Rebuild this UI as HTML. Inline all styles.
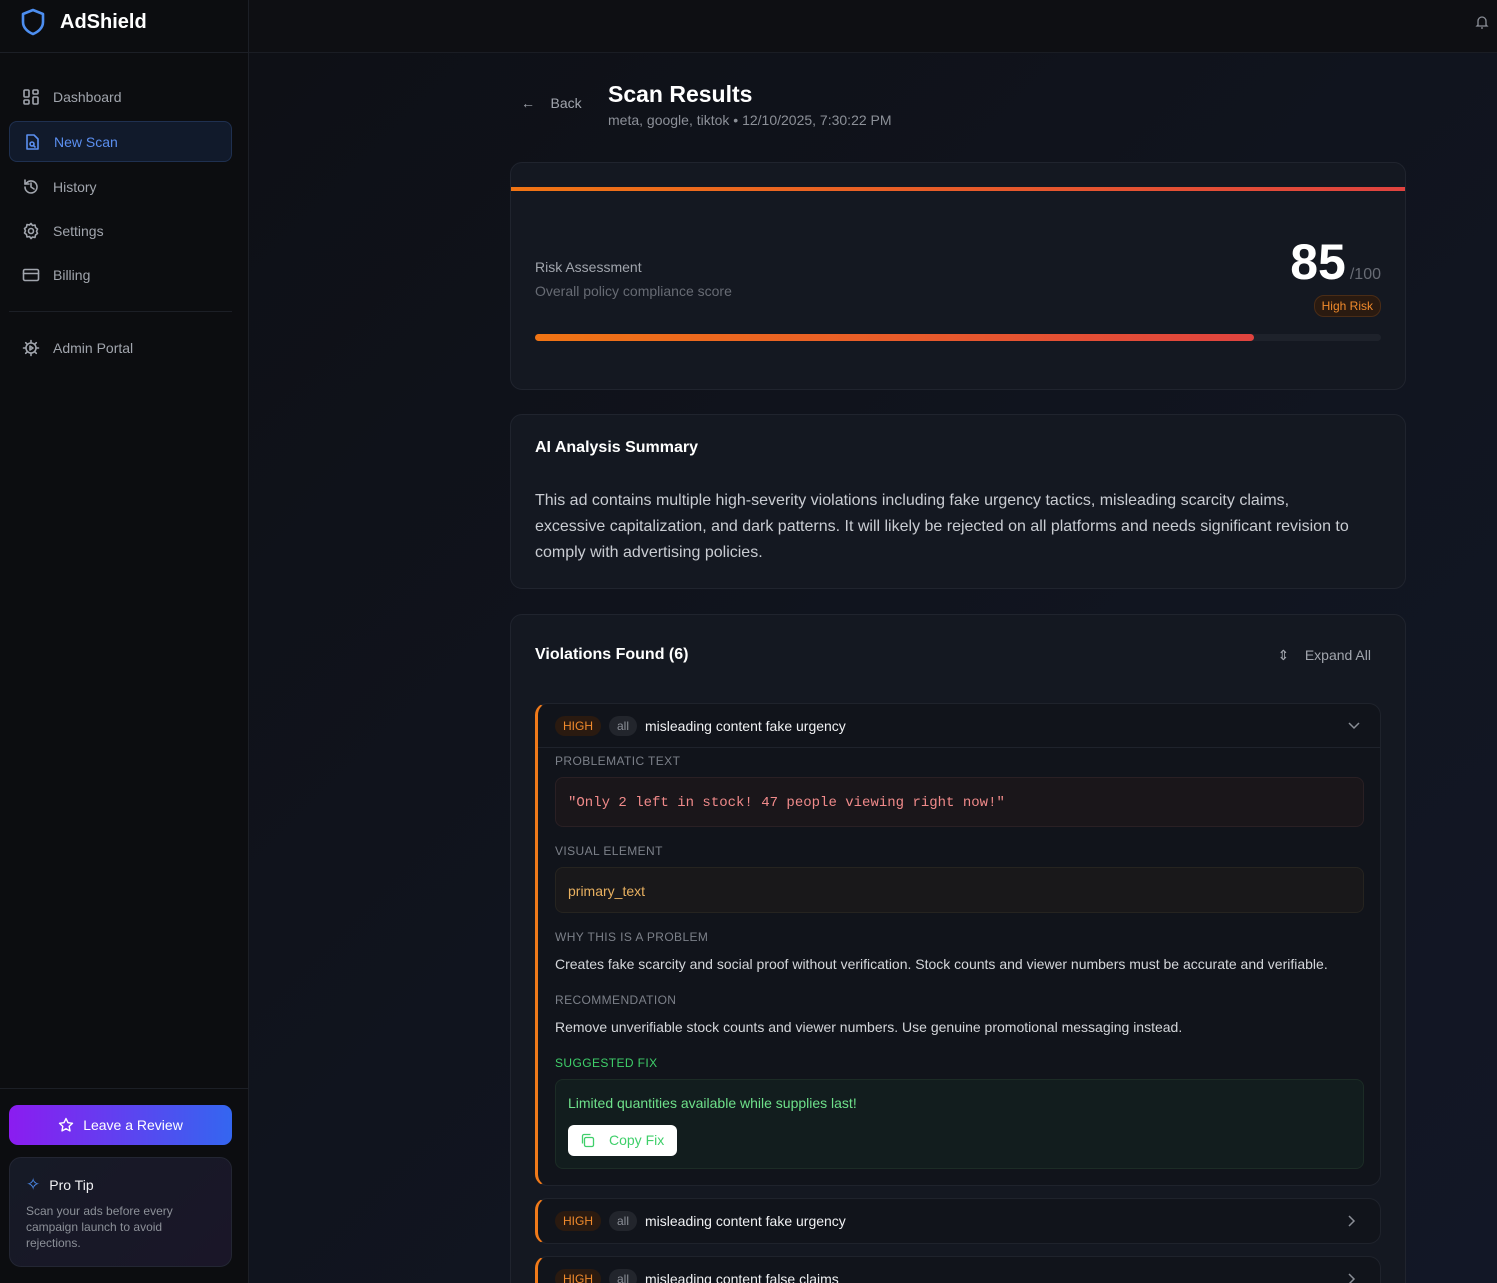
<!DOCTYPE html>
<html><head><meta charset="utf-8"><style>
*{box-sizing:border-box;margin:0;padding:0}
html,body{width:1497px;height:1283px;overflow:hidden}
body{font-family:"Liberation Sans",sans-serif;background:#0f1219;color:#e5e7eb}
#w{position:relative;width:1497px;height:1283px;overflow:hidden}
.sb{position:absolute;left:0;top:0;width:249px;height:1283px;background:#0c0d10;border-right:1px solid #1c1f26}
.top{position:absolute;left:249px;top:0;right:0;height:53px;background:#0e0f13;border-bottom:1px solid #1a1d24}
.main{position:absolute;left:249px;top:53px;right:0;bottom:0;background:linear-gradient(135deg,#0e1016 0%,#111520 60%,#121726 100%)}
.logo{position:absolute;left:20px;top:7px;display:flex;align-items:center;gap:14px;font-size:20px;font-weight:bold;color:#fff}
.hr{position:absolute;left:0;width:249px;height:1px;background:#1c1f26}
.nav{position:absolute;left:9px;width:223px;height:41px;display:flex;align-items:center;padding-left:13px;gap:13px;font-size:14px;color:#a1a5ad}
.nav.act{background:#111a2b;border:1px solid #1f3050;border-radius:8px;color:#5b8ff0}
.nav svg{width:18px;height:18px;fill:none;stroke:currentColor;stroke-width:1.6;stroke-linecap:round;stroke-linejoin:round}
.card{position:absolute;left:510px;width:896px;background:#141821;border:1px solid #20242e;border-radius:12px}
.lbl{font-size:12px;letter-spacing:.4px;color:#7c8089;position:absolute;left:555px}
.box{position:absolute;left:555px;width:809px;border-radius:8px}
.badge{display:inline-block;font-size:12px;padding:3px 8px;border-radius:10px}
.vrow{position:absolute;left:535px;width:846px;border:1px solid #1f232c;border-left:3px solid #f07a1a;border-radius:12px;background:#11141b}
.vh{height:44px;display:flex;align-items:center;padding-left:17px;gap:8px;font-size:14px;color:#f0f1f3}
.hi{background:#2a1a10;color:#f08a2c}.al{background:#22252c;color:#8a8e96}
</style></head><body><div id="w">
<div class="sb">
 <div class="logo"><svg width="26" height="30" viewBox="0 0 26 30"><path d="M13 3 L23 7 V15 C23 21 18 25 13 27 C8 25 3 21 3 15 V7 Z" fill="none" stroke="#4d8ef0" stroke-width="2.6" stroke-linejoin="round"/></svg>AdShield</div>
 <div class="hr" style="top:52px"></div>
 <div class="nav" style="top:76px"><svg viewBox="0 0 18 18"><rect x="2" y="2" width="5" height="7" rx="1"/><rect x="11" y="2" width="5" height="4" rx="1"/><rect x="2" y="12" width="5" height="4" rx="1"/><rect x="11" y="9" width="5" height="7" rx="1"/></svg>Dashboard</div>
 <div class="nav act" style="top:121px"><svg viewBox="0 0 18 18"><path d="M4 2h7l4 4v10H4z"/><circle cx="9" cy="11" r="2"/><path d="M10.5 12.5l1.5 1.5"/></svg>New Scan</div>
 <div class="nav" style="top:166px"><svg viewBox="0 0 18 18"><path d="M3 9a6 6 0 1 0 2-4.5L3 6"/><path d="M3 2v4h4"/><path d="M9 5v4l3 2"/></svg>History</div>
 <div class="nav" style="top:210px"><svg viewBox="0 0 18 18"><circle cx="9" cy="9" r="2.5"/><path d="M9 1.5l1.5 2 2.5-.5.5 2.5 2 1.5-1 2.3 1 2.2-2 1.5-.5 2.5-2.5-.5L9 16.5l-1.5-2-2.5.5-.5-2.5-2-1.5 1-2.2-1-2.3 2-1.5.5-2.5 2.5.5z"/></svg>Settings</div>
 <div class="nav" style="top:254px"><svg viewBox="0 0 18 18"><rect x="1.5" y="3.5" width="15" height="11" rx="1.5"/><path d="M1.5 7.5h15"/></svg>Billing</div>
 <div class="hr" style="top:311px;left:9px;width:223px"></div>
 <div class="nav" style="top:327px"><svg viewBox="0 0 18 18"><circle cx="9" cy="9" r="5"/><path d="M8 7l3 2-3 2z"/><path d="M9 1.5v2M9 14.5v2M1.5 9h2M14.5 9h2M3.7 3.7l1.4 1.4M12.9 12.9l1.4 1.4M3.7 14.3l1.4-1.4M12.9 5.1l1.4-1.4"/></svg>Admin Portal</div>
 <div class="hr" style="top:1088px"></div>
 <div style="position:absolute;left:9px;top:1105px;width:223px;height:40px;border-radius:9px;background:linear-gradient(90deg,#8b1cf0,#3466f0);display:flex;align-items:center;justify-content:center;gap:9px;font-size:14px;color:#fff"><svg width="16" height="16" viewBox="0 0 16 16"><path d="M8 1.5l2 4.2 4.5.6-3.3 3.1.8 4.5L8 11.7l-4 2.2.8-4.5L1.5 6.3 6 5.7z" fill="none" stroke="#fff" stroke-width="1.4" stroke-linejoin="round"/></svg>Leave a Review</div>
 <div style="position:absolute;left:9px;top:1157px;width:223px;height:110px;border-radius:12px;background:linear-gradient(135deg,#161a26,#1a1628);border:1px solid #232633">
  <div style="position:absolute;left:16px;top:17px;display:flex;gap:9px;align-items:center;font-size:14px;color:#f0f0f3"><span style="color:#4d8ef0;font-size:17px">✧</span>Pro Tip</div>
  <div style="position:absolute;left:16px;top:45px;width:180px;font-size:12px;line-height:16px;color:#8c9098">Scan your ads before every campaign launch to avoid rejections.</div>
 </div>
</div>
<div class="top"><svg style="position:absolute;right:8px;top:14px" width="14" height="16" viewBox="0 0 14 16"><path d="M3 11V7a4 4 0 0 1 8 0v4l1 1H2z M6 14h2" fill="none" stroke="#8a8e96" stroke-width="1.3"/></svg></div>
<div class="main"></div>
<div style="position:absolute;left:521px;top:95px;font-size:14px;color:#a1a5ad">←&nbsp;&nbsp;&nbsp;&nbsp;Back</div>
<div style="position:absolute;left:608px;top:81px;font-size:23px;font-weight:bold;color:#fff">Scan Results</div>
<div style="position:absolute;left:608px;top:112px;font-size:14px;color:#8c9098">meta, google, tiktok • 12/10/2025, 7:30:22 PM</div>

<div class="card" style="top:162px;height:228px;overflow:hidden">
 <div style="position:absolute;left:0;right:0;top:24px;height:4px;background:linear-gradient(90deg,#f07414,#e0433f)"></div>
 <div style="position:absolute;left:24px;top:96px;font-size:14px;color:#a1a5ad">Risk Assessment</div>
 <div style="position:absolute;left:24px;top:120px;font-size:14px;color:#676b74">Overall policy compliance score</div>
 <div style="position:absolute;right:24px;top:70px;display:flex;align-items:baseline;gap:4px"><span style="font-size:50px;font-weight:bold;color:#fff">85</span><span style="font-size:16px;color:#676b74">/100</span></div>
 <div style="position:absolute;right:24px;top:132px;font-size:12px;color:#f08a2c;background:#2a1a10;border:1px solid #4a2c16;border-radius:10px;padding:3px 7px">High Risk</div>
 <div style="position:absolute;left:24px;right:24px;top:171px;height:7px;border-radius:4px;background:#1e222b"><div style="width:85%;height:100%;border-radius:4px;background:linear-gradient(90deg,#f07414,#e0433f)"></div></div>
</div>

<div class="card" style="top:414px;height:175px">
 <div style="position:absolute;left:24px;top:24px;font-size:16px;font-weight:bold;color:#fff">AI Analysis Summary</div>
 <div style="position:absolute;left:24px;top:73px;width:850px;font-size:16px;line-height:26px;color:#c9ccd2">This ad contains multiple high-severity violations including fake urgency tactics, misleading scarcity claims,<br>excessive capitalization, and dark patterns. It will likely be rejected on all platforms and needs significant revision to comply with advertising policies.</div>
</div>

<div class="card" style="top:614px;height:700px">
 <div style="position:absolute;left:24px;top:31px;font-size:16px;font-weight:bold;color:#fff">Violations Found (6)</div>
 <div style="position:absolute;right:34px;top:32px;font-size:14px;color:#a1a5ad">⇕&nbsp;&nbsp;&nbsp;&nbsp;Expand All</div>
</div>

<div class="vrow" style="top:703px;height:483px">
 <div class="vh" style="border-bottom:1px solid #1f232c"><span class="badge hi">HIGH</span><span class="badge al">all</span>misleading content fake urgency<svg style="position:absolute;right:20px" width="12" height="8" viewBox="0 0 12 8"><path d="M1 1l5 5 5-5" fill="none" stroke="#8a8e96" stroke-width="1.5"/></svg></div>
</div>
<div class="lbl" style="top:754px">PROBLEMATIC TEXT</div>
<div class="box" style="top:777px;height:50px;background:#1a161a;border:1px solid #2a2024;font-family:'Liberation Mono',monospace;font-size:14px;color:#f08a8a;padding:17px 12px">"Only 2 left in stock! 47 people viewing right now!"</div>
<div class="lbl" style="top:844px">VISUAL ELEMENT</div>
<div class="box" style="top:867px;height:46px;background:#19181a;border:1px solid #262420;font-size:14px;color:#e8b060;padding:15px 12px">primary_text</div>
<div class="lbl" style="top:930px">WHY THIS IS A PROBLEM</div>
<div style="position:absolute;left:555px;top:956px;font-size:14px;color:#d4d6da">Creates fake scarcity and social proof without verification. Stock counts and viewer numbers must be accurate and verifiable.</div>
<div class="lbl" style="top:993px">RECOMMENDATION</div>
<div style="position:absolute;left:555px;top:1019px;font-size:14px;color:#d4d6da">Remove unverifiable stock counts and viewer numbers. Use genuine promotional messaging instead.</div>
<div class="lbl" style="top:1056px;color:#3fcf6a">SUGGESTED FIX</div>
<div class="box" style="top:1079px;height:90px;background:#121d1e;border:1px solid #1c2c26">
 <div style="position:absolute;left:12px;top:15px;font-size:14px;color:#6ee08a">Limited quantities available while supplies last!</div>
 <div style="position:absolute;left:12px;top:45px;width:109px;height:31px;background:#fff;border-radius:6px;font-size:14px;color:#3fcf6a;padding:7px 0 0 41px">Copy Fix<svg style="position:absolute;left:12px;top:8px" width="15" height="15" viewBox="0 0 15 15"><rect x="4.5" y="4.5" width="9" height="9" rx="1.5" fill="none" stroke="#3fcf6a" stroke-width="1.3"/><path d="M2.5 10.5V3a1.5 1.5 0 0 1 1.5-1.5h6.5" fill="none" stroke="#3fcf6a" stroke-width="1.3"/></svg></div>
</div>
<div class="vrow" style="top:1198px;height:46px"><div class="vh"><span class="badge hi">HIGH</span><span class="badge al">all</span>misleading content fake urgency<svg style="position:absolute;right:24px" width="8" height="12" viewBox="0 0 8 12"><path d="M1 1l5 5-5 5" fill="none" stroke="#8a8e96" stroke-width="1.5"/></svg></div></div>
<div class="vrow" style="top:1256px;height:46px"><div class="vh"><span class="badge hi">HIGH</span><span class="badge al">all</span>misleading content false claims<svg style="position:absolute;right:24px" width="8" height="12" viewBox="0 0 8 12"><path d="M1 1l5 5-5 5" fill="none" stroke="#8a8e96" stroke-width="1.5"/></svg></div></div>
</div></body></html>
